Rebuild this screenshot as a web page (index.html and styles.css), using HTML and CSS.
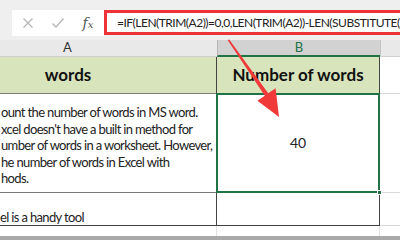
FILE: index.html
```html
<!DOCTYPE html>
<html>
<head>
<meta charset="utf-8">
<link rel="stylesheet" href="styles.css">
</head>
<body>
<div class="app">
  <div class="toolbar">
    <div class="fbar">
      <div class="icons">
        <span class="ic"><svg width="12" height="12" viewBox="0 0 12 12"><path d="M1.5 1.5 L10.5 10.5 M10.5 1.5 L1.5 10.5" stroke="#b8b8b8" stroke-width="1.4" fill="none"/></svg></span>
        <span class="ic"><svg width="14" height="12" viewBox="0 0 14 12"><path d="M1.5 6.5 L5 10 L12.5 1.5" stroke="#b8b8b8" stroke-width="1.5" fill="none"/></svg></span>
        <span class="ic fx">f<sub>x</sub></span>
      </div>
      <div class="formula">=IF(LEN(TRIM(A2))=0,0,LEN(TRIM(A2))-LEN(SUBSTITUTE(A2," ",""))+1)</div>
    </div>
  </div>
  <div class="sheet">
    <div class="hdr hA"><span class="lblA">A</span></div>
    <div class="hdr hB">B</div>
    <div class="hdr hC"></div>

    <div class="cell r1 cA head"><span class="ctrA">words</span></div>
    <div class="cell r1 cB head">Number of words</div>
    <div class="cell r1 cC"></div>

    <div class="cell r2 cA text">ount the number of words in MS word.<br>xcel doesn't have a built in method for<br>umber of words in a worksheet. However,<br>he number of words in Excel with<br>hods.</div>
    <div class="cell r2 cB num sel">40<span class="handle"></span></div>
    <div class="cell r2 cC"></div>

    <div class="cell r3 cA bottomtext">el is a handy tool</div>
    <div class="cell r3 cB"></div>
    <div class="cell r3 cC"></div>

    <div class="cell r4 cA"></div>
    <div class="cell r4 cB"></div>
    <div class="cell r4 cC"></div>
  </div>
  <div class="bar"></div>
  <svg class="arrow" width="400" height="240" viewBox="0 0 400 240">
    <polygon points="227.6,40 229.2,39.6 268.2,93.3 275.6,88.3 279,117 257.4,100.7 264.8,95.7" fill="#f03a3a"/>
  </svg>
</div>
</body>
</html>
```
FILE: styles.css
```css
* { box-sizing: border-box; margin: 0; padding: 0; }
html, body { width: 400px; height: 240px; overflow: hidden; background: #ffffff; }
body { font-family: Lato, "Liberation Sans", sans-serif; color: #222; }
.app { position: relative; width: 400px; height: 240px; overflow: hidden; }

.toolbar { height: 40px; background: #efefef; padding: 10px 0 0 12px; overflow: hidden; }
.fbar { display: flex; height: 26px; width: 420px; }
.icons { width: 92px; background: #ffffff; display: flex; padding-left: 1px; align-items: center; }
.ic { width: 30px; display: flex; justify-content: center; align-items: center; }
.fx { font-family: "DejaVu Serif", "Liberation Serif", serif; font-style: italic; font-size: 14px; color: #555; }
.fx sub { font-size: 10px; vertical-align: baseline; position: relative; top: 1px; }
.formula { flex: 1; height: 25px; border: 3px solid #ee3338; background: #fff; padding-left: 10px;
  font-size: 12px; letter-spacing: -0.5px; line-height: 19px; white-space: nowrap; overflow: hidden; color: #222; }

.sheet { display: grid; grid-template-columns: 217px 163px 20px; grid-template-rows: 17px 37px 99px 33px 10px; }
.hdr { background: #e9e9e9; font-size: 13px; line-height: 15px; color: #333; border-bottom: 1px solid #cfcfcf; }
.lblA { display: inline-block; padding-left: 63px; }
.hB { background: #d2d2d2; border-left: 1px solid #b5b5b5; border-bottom: 2px solid #217346; color: #217346; text-align: center; }
.hC { border-left: 1px solid #c4c4c4; }

.cell { overflow: hidden; white-space: nowrap; }
.cA { border-right: 1px solid #444; }
.cB { border-right: 1px solid #444; }
.r1 { border-bottom: 1px solid #7a7a7a; }
.r1.cA, .r1.cB { background: #d8e4bc; }
.r1.cC { border-bottom-color: #d9d9d9; }
.r2 { border-bottom: 1px solid #7a7a7a; }
.r2.cC { border-bottom-color: #d9d9d9; }
.r3 { border-bottom: 1px solid #404040; }
.r3.cC { border-bottom-color: #d9d9d9; }
.r4.cA, .r4.cB { border-right-color: #e2e2e2; }

.head { font-weight: bold; font-size: 17px; line-height: 36px; text-align: center; color: #111; }
.ctrA { display: block; width: 136px; text-align: center; }
.text { font-size: 13px; letter-spacing: -0.65px; line-height: 16.5px; padding-top: 10px; padding-left: 1px; }
.num { font-size: 14px; text-align: center; line-height: 98px; }
.bottomtext { font-size: 13px; letter-spacing: -0.65px; line-height: 16.5px; display: flex; align-items: flex-end; }

.sel { position: relative; overflow: visible; }
.sel::after { content: ""; position: absolute; left: -1px; top: -1px; right: -1px; bottom: -1px; border: 2px solid #217346; }
.handle { position: absolute; right: -3px; bottom: -3px; width: 5px; height: 5px; background: #217346; border: 1px solid #fff; z-index: 2; }

.bar { height: 4px; background: #a9a9a9; }
.arrow { position: absolute; left: 0; top: 0; }
```
